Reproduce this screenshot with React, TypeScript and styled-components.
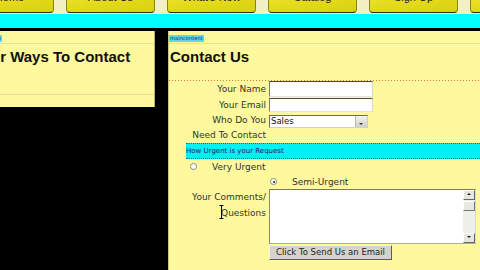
import React from 'react';
import styled, { createGlobalStyle } from 'styled-components';

const GlobalStyle = createGlobalStyle`
  html, body {
    margin: 0;
    padding: 0;
    background: #000;
    overflow: hidden;
  }
  body {
    font-family: "DejaVu Sans", Verdana, sans-serif;
  }
`;

const navItems = ['Home', 'About Us', "What's New", 'Catalog', 'Sign Up', 'Contact'];

const App: React.FC = () => {
  return (
    <>
      <GlobalStyle />
      <Page>
        <NavBar>
          {navItems.map((item) => (
            <NavButton key={item}>{item}</NavButton>
          ))}
        </NavBar>
        <Band />

        <Main>
          <SidePanel>
            <PanelHeader>
              <PanelTag>secondarynav</PanelTag>
            </PanelHeader>
            <Heading $indent={2}>Other Ways To Contact</Heading>
            <SideBody />
          </SidePanel>

          <ContentPanel>
            <PanelHeader>
              <PanelTag>maincontent</PanelTag>
            </PanelHeader>
            <Heading $indent={1}>Contact Us</Heading>
            <DottedRule />

            <Form onSubmit={(e) => e.preventDefault()}>
              <Label>Your Name</Label>
              <Field>
                <TextInput type="text" $height={16} />
              </Field>

              <Label $top>Your Email</Label>
              <Field>
                <TextInput type="text" $height={14} />
              </Field>

              <Label $top $lift>
                Who Do You
                <br />
                Need To Contact
              </Label>
              <Field>
                <SelectBox>
                  <SelectField defaultValue="Sales">
                    <option>Sales</option>
                    <option>Support</option>
                    <option>Billing</option>
                  </SelectField>
                  <DropArrow />
                </SelectBox>
              </Field>

              <UrgencyBar>How Urgent is your Request</UrgencyBar>

              <RadioCell $pad={4}>
                <Radio type="radio" name="urgency" />
                <span>Very Urgent</span>
              </RadioCell>
              <div />

              <div />
              <RadioCell $pad={1}>
                <Radio type="radio" name="urgency" defaultChecked />
                <span>Semi-Urgent</span>
              </RadioCell>

              <CommentLabel>
                Your Comments/
                <br />
                Questions
                <Caret viewBox="0 0 5 14" width="5" height="14">
                  <path d="M0.5 0.5h4M2.5 0.5v13M0.5 13.5h4" stroke="#000" strokeWidth="1" fill="none" />
                </Caret>
              </CommentLabel>
              <Field>
                <TextAreaBox>
                  <CommentArea />
                  <ScrollTrack>
                    <ScrollArrow $dir="up" />
                    <ScrollThumb />
                    <TrackFill />
                    <ScrollArrow $dir="down" />
                  </ScrollTrack>
                </TextAreaBox>
              </Field>

              <div />
              <Field>
                <SendButton type="submit">Click To Send Us an Email</SendButton>
              </Field>
            </Form>
          </ContentPanel>
        </Main>
      </Page>
    </>
  );
};

export default App;

const Page = styled.div`
  margin-top: -12px;
  width: 480px;
`;

const NavBar = styled.div`
  display: flex;
  gap: 12px;
  height: 26px;
  margin-left: -35px;
  background: #f4f0c6;
  width: 540px;
`;

const NavButton = styled.div`
  flex: 0 0 89px;
  height: 25px;
  box-sizing: border-box;
  padding-top: 3px;
  background: linear-gradient(170deg, #f2ec50 0%, #e4dc1c 45%, #d9d010 100%);
  border-bottom: 1px solid #2e2c08;
  border-left: 1px solid #8a8418;
  border-right: 1px solid #8a8418;
  border-radius: 0 0 4px 4px;
  font-family: "Liberation Sans", Arial, sans-serif;
  font-size: 11px;
  line-height: 12px;
  color: #222;
  text-align: center;
`;

const Band = styled.div`
  height: 14px;
  background: #00ffff;
`;

const Main = styled.div`
  display: flex;
  align-items: flex-start;
  gap: 13px;
  padding-top: 3px;
  background: #000;
  height: 242px;
`;

const SidePanel = styled.div`
  flex: 0 0 191px;
  margin-left: -36px;
  height: 76px;
  box-sizing: border-box;
  background: #fdf99c;
  border-right: 1px solid #b8b480;
`;

const ContentPanel = styled.div`
  flex: 1;
  height: 242px;
  background: #fdf99c;
  border-left: 1px solid #c8c48a;
  box-sizing: border-box;
`;

const PanelHeader = styled.div`
  padding: 4px 0 1px;
  border-bottom: 1px solid #e6e2a4;
  line-height: 0;
`;

const PanelTag = styled.span`
  display: inline-block;
  background: #62d6e6;
  color: #1c2c80;
  font-size: 5.2px;
  line-height: 7px;
  padding: 0 1px;
`;

const Heading = styled.h2<{ $indent: number }>`
  margin: 4px 0 0;
  padding-left: ${(p) => p.$indent}px;
  font-family: "Liberation Sans", Arial, sans-serif;
  font-weight: bold;
  font-size: 15px;
  line-height: 18px;
  color: #111;
  white-space: nowrap;
`;

const SideBody = styled.div`
  height: 28px;
  border-bottom: 1px solid #e2de98;
`;

const DottedRule = styled.div`
  margin-top: 14px;
  height: 1px;
  background: repeating-linear-gradient(90deg, #cf7a3a 0 1px, transparent 1px 3px);
`;

const Form = styled.form`
  display: grid;
  grid-template-columns: 80px 1fr;
  grid-template-rows: 17px 17px 28px 16px 15px 15px 56px 15px;
  column-gap: 3px;
  padding-left: 17px;
  font-size: 9px;
  color: #333;
`;

const Label = styled.div<{ $top?: boolean; $lift?: boolean }>`
  text-align: right;
  white-space: nowrap;
  line-height: 15px;
  align-self: ${(p) => (p.$top ? 'start' : 'center')};
  margin-top: ${(p) => (p.$lift ? '-2px' : '0')};
`;

const CommentLabel = styled.div`
  position: relative;
  text-align: right;
  white-space: nowrap;
  line-height: 16px;
`;

const Caret = styled.svg`
  position: absolute;
  left: 33px;
  top: 16px;
`;

const Field = styled.div`
  display: flex;
  align-items: flex-start;
`;

const TextInput = styled.input<{ $height: number }>`
  width: 104px;
  height: ${(p) => p.$height}px;
  box-sizing: border-box;
  margin: 0;
  padding: 0 2px;
  background: #fff;
  border: 1px solid;
  border-color: #4a4a40 #d8d8d0 #e4e4dc #7a7a70;
  font: inherit;
  outline: none;
`;

const SelectBox = styled.div`
  display: flex;
  width: 99px;
  height: 13px;
  box-sizing: border-box;
  background: #fff;
  border: 1px solid;
  border-color: #6a6a60 #d0d0c8 #d0d0c8 #6a6a60;
`;

const SelectField = styled.select`
  flex: 1;
  appearance: none;
  border: none;
  margin: 0;
  padding: 0 1px;
  background: #fff;
  font-family: inherit;
  font-size: 8.5px;
  line-height: 11px;
  color: #111;
  outline: none;
`;

const DropArrow = styled.span`
  position: relative;
  flex: 0 0 11px;
  background: linear-gradient(#f4f4f0, #d0d0c8);
  border-left: 1px solid #b8b8b0;

  &::after {
    content: '';
    position: absolute;
    left: 3px;
    top: 7px;
    border-left: 2px solid transparent;
    border-right: 2px solid transparent;
    border-top: 2px solid #333;
  }
`;

const UrgencyBar = styled.div`
  grid-column: 1 / -1;
  background: #00f0f4;
  border-top: 1px dotted #2a6a7a;
  border-bottom: 1px dotted #2a6a7a;
  font-size: 7px;
  line-height: 14px;
  color: #10205a;
  white-space: nowrap;
`;

const RadioCell = styled.label<{ $pad: number }>`
  display: flex;
  align-items: center;
  gap: 15px;
  padding-left: ${(p) => p.$pad}px;
  white-space: nowrap;
`;

const Radio = styled.input`
  appearance: none;
  margin: 0;
  width: 7px;
  height: 7px;
  flex: 0 0 7px;
  border-radius: 50%;
  box-sizing: border-box;
  border: 1px solid #8a8a80;
  background: #fff;
  position: relative;

  &:checked::after {
    content: '';
    position: absolute;
    left: 1.5px;
    top: 1.5px;
    width: 2px;
    height: 2px;
    border-radius: 50%;
    background: #111;
  }
`;

const TextAreaBox = styled.div`
  display: flex;
  width: 207px;
  height: 55px;
  box-sizing: border-box;
  background: #fff;
  border: 1px solid;
  border-color: #7c7a5a #d8d8d0 #b0ae90 #8a8870;
`;

const CommentArea = styled.textarea`
  flex: 1;
  border: none;
  margin: 0;
  padding: 1px 2px;
  resize: none;
  font: inherit;
  outline: none;
  background: #fff;
`;

const ScrollTrack = styled.div`
  flex: 0 0 12px;
  display: flex;
  flex-direction: column;
  background: #efefea;
`;

const ScrollArrow = styled.div<{ $dir: 'up' | 'down' }>`
  position: relative;
  height: 8px;
  background: #e6e6e0;
  border: 1px solid;
  border-color: #fff #666 #666 #fff;

  &::after {
    content: '';
    position: absolute;
    left: 3px;
    top: 2px;
    border-left: 2px solid transparent;
    border-right: 2px solid transparent;
    ${(p) => (p.$dir === 'up' ? 'border-bottom: 2px solid #222;' : 'border-top: 2px solid #222;')}
  }
`;

const ScrollThumb = styled.div`
  height: 8px;
  margin-top: 1px;
  background: #e8e8e2;
  border: 1px solid;
  border-color: #fff #777 #777 #fff;
`;

const TrackFill = styled.div`
  flex: 1;
`;

const SendButton = styled.button`
  width: 123px;
  height: 15px;
  margin: 0;
  padding: 0;
  background: #d6d4ca;
  border: 1px solid;
  border-color: #f4f4ee #5e5e58 #5e5e58 #f4f4ee;
  font-family: inherit;
  font-size: 8.5px;
  line-height: 13px;
  color: #222;
  white-space: nowrap;
`;
